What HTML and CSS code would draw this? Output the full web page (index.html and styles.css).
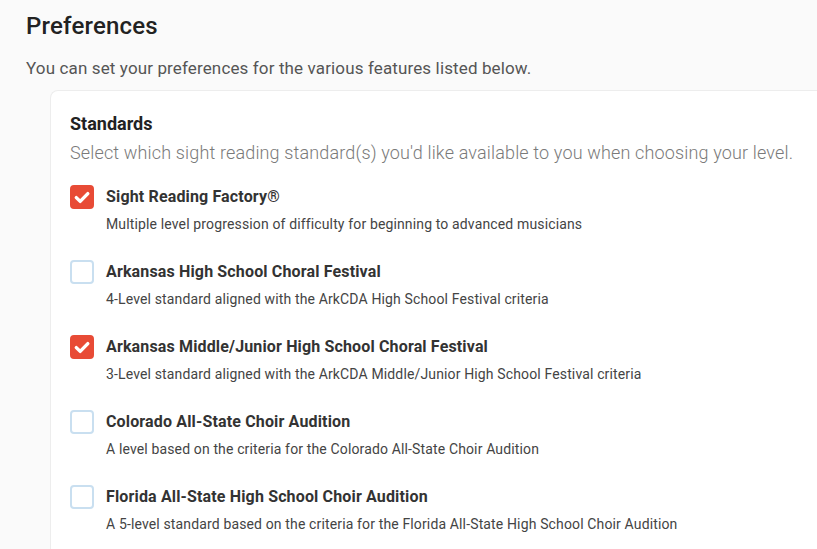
FILE: index.html
```html
<!DOCTYPE html>
<html>
<head>
<meta charset="utf-8">
<link rel="stylesheet" href="styles.css">
</head>
<body>
<div class="page">
  <h1 class="title">Preferences</h1>
  <p class="intro">You can set your preferences for the various features listed below.</p>
  <div class="card">
    <h2 class="card-title">Standards</h2>
    <p class="card-desc">Select which sight reading standard(s) you'd like available to you when choosing your level.</p>
    <ul class="list">
      <li class="item">
        <span class="box checked"><svg viewBox="0 0 24 24" width="24" height="24"><path d="M6.3 12.6l3.9 3.8 7.6-7.8" fill="none" stroke="#fff" stroke-width="3.4" stroke-linecap="round" stroke-linejoin="round"/></svg></span>
        <div class="text">
          <div class="name">Sight Reading Factory®</div>
          <div class="desc">Multiple level progression of difficulty for beginning to advanced musicians</div>
        </div>
      </li>
      <li class="item">
        <span class="box"></span>
        <div class="text">
          <div class="name">Arkansas High School Choral Festival</div>
          <div class="desc">4-Level standard aligned with the ArkCDA High School Festival criteria</div>
        </div>
      </li>
      <li class="item">
        <span class="box checked"><svg viewBox="0 0 24 24" width="24" height="24"><path d="M6.3 12.6l3.9 3.8 7.6-7.8" fill="none" stroke="#fff" stroke-width="3.4" stroke-linecap="round" stroke-linejoin="round"/></svg></span>
        <div class="text">
          <div class="name">Arkansas Middle/Junior High School Choral Festival</div>
          <div class="desc">3-Level standard aligned with the ArkCDA Middle/Junior High School Festival criteria</div>
        </div>
      </li>
      <li class="item">
        <span class="box"></span>
        <div class="text">
          <div class="name">Colorado All-State Choir Audition</div>
          <div class="desc">A level based on the criteria for the Colorado All-State Choir Audition</div>
        </div>
      </li>
      <li class="item">
        <span class="box"></span>
        <div class="text">
          <div class="name">Florida All-State High School Choir Audition</div>
          <div class="desc">A 5-level standard based on the criteria for the Florida All-State High School Choir Audition</div>
        </div>
      </li>
    </ul>
  </div>
</div>
</body>
</html>
```

FILE: styles.css
```css
html, body {
  margin: 0;
  padding: 0;
  background: #fafafa;
  font-family: Roboto, "Liberation Sans", sans-serif;
  overflow: hidden;
}
.page {
  padding: 10px 0 0 26px;
}
.title {
  margin: 0;
  font-size: 24px;
  font-weight: 500;
  line-height: 32px;
  color: #222;
  letter-spacing: 0.2px;
}
.intro {
  margin: 14px 0 0;
  font-size: 17px;
  line-height: 24px;
  color: #555;
  letter-spacing: 0.13px;
}
.card {
  margin: 10px 0 0 24px;
  background: #fff;
  border: 1px solid #ededed;
  border-right: none;
  border-radius: 8px 0 0 8px;
  padding: 21px 0 0 19px;
  height: 600px;
}
.card-title {
  margin: 0;
  font-size: 18px;
  font-weight: 700;
  line-height: 24px;
  color: #222;
}
.card-desc {
  margin: 4px 0 0;
  font-size: 18px;
  font-weight: 300;
  line-height: 26px;
  color: #7a7a7a;
  white-space: nowrap;
  letter-spacing: 0.15px;
}
.list {
  list-style: none;
  margin: 20px 0 0;
  padding: 0;
}
.item {
  display: flex;
  gap: 12px;
  margin-bottom: 27px;
}
.box {
  box-sizing: border-box;
  width: 24px;
  height: 24px;
  border: 2px solid #c9dff0;
  border-radius: 4px;
  flex: none;
  position: relative;
  top: -1px;
}
.box.checked {
  background: #e84b36;
  border-color: #e84b36;
}
.box svg {
  position: absolute;
  left: -2px;
  top: -2px;
}
.text {
  padding-top: 1px;
}
.name {
  font-size: 16px;
  font-weight: 700;
  line-height: 20px;
  color: #333;
  letter-spacing: 0.15px;
}
.desc {
  margin-top: 7px;
  font-size: 14px;
  line-height: 20px;
  color: #444;
  letter-spacing: 0.14px;
}
```
